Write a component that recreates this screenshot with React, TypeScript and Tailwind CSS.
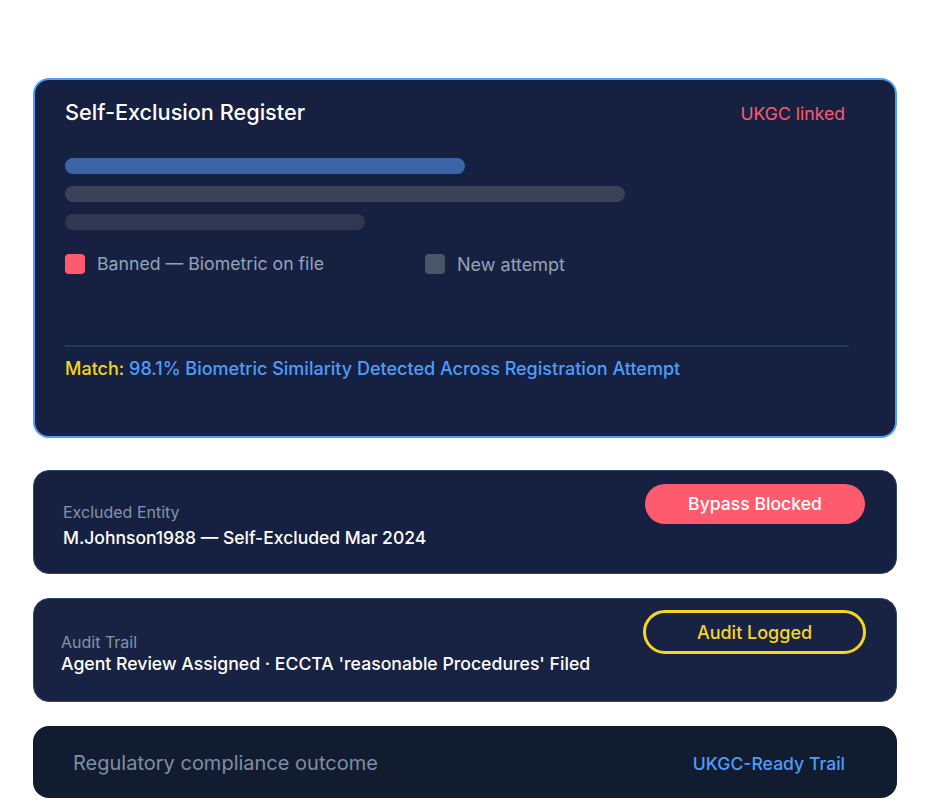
const App = () => {
  return (
    <div className="min-h-screen bg-white font-['Inter',sans-serif] antialiased pt-[78px] pl-[33px] w-[942px] h-[804px] overflow-hidden">
      <div className="w-[864px] flex flex-col">
        {/* register card */}
        <div className="h-[360px] rounded-2xl border-2 border-[#4f9cf9] bg-[#162142] pl-[30px] pr-[46px] pt-5">
          <div className="flex justify-between items-center h-6">
            <h2 className="text-[21.7px] font-medium text-white">Self-Exclusion Register</h2>
            <span className="mr-[4px] pt-[4px] text-[17.6px] text-[#ff5a6e]">UKGC linked</span>
          </div>
          <div className="mt-[34px] flex flex-col gap-3">
            <div className="h-4 w-[400px] rounded-full bg-[#3a66a8]"></div>
            <div className="h-4 w-[560px] rounded-full bg-[#3a4159]"></div>
            <div className="h-4 w-[300px] rounded-full bg-[#2f3753]"></div>
          </div>
          <div className="mt-6 flex items-center h-5">
            <div className="flex items-center gap-3 w-[360px]">
              <span className="w-5 h-5 rounded bg-[#ff5a6e]"></span>
              <span className="text-[17.7px] text-[#94a3b8]">Banned — Biometric on file</span>
            </div>
            <div className="flex items-center gap-3">
              <span className="w-5 h-5 rounded bg-[#4a5568]"></span>
              <span className="text-[18px] text-[#94a3b8]">New attempt</span>
            </div>
          </div>
          <div className="mt-[71px] h-0.5 bg-[#24375f]"></div>
          <p className="mt-[8px] text-[18px] font-medium text-[#4f9cf9]">
            <span className="text-[#f8d520]">Match:</span> 98.1% Biometric Similarity Detected Across Registration Attempt
          </p>
        </div>

        {/* excluded entity */}
        <div className="mt-8 h-[104px] rounded-2xl border border-[#33466f] bg-[#162142] pl-[29px] pr-[31px] pt-[13px] flex justify-between">
          <div className="pt-[18px]">
            <div className="text-[16px] leading-5 text-[#8593aa]">Excluded Entity</div>
            <div className="mt-[5px] text-[17.5px] leading-[22px] font-medium text-white">M.Johnson1988 — Self-Excluded Mar 2024</div>
          </div>
          <div className="w-[220px] h-10 rounded-full bg-[#ff5a6e] flex items-center justify-center text-[17.6px] font-medium text-white">
            Bypass Blocked
          </div>
        </div>

        {/* audit trail */}
        <div className="mt-6 h-[104px] rounded-2xl border border-[#33466f] bg-[#182343] pl-[27px] pr-[30px] pt-[11px] flex justify-between">
          <div className="pt-[22px]">
            <div className="text-[16px] leading-5 text-[#8593aa]">Audit Trail</div>
            <div className="mt-px text-[17.67px] leading-[22px] font-medium text-white">Agent Review Assigned · ECCTA 'reasonable Procedures' Filed</div>
          </div>
          <div className="w-[223px] h-11 rounded-full border-[3px] border-[#f8d520] flex items-center justify-center text-[18px] font-medium text-[#f8d520]">
            Audit Logged
          </div>
        </div>

        {/* outcome */}
        <div className="mt-6 h-[72px] rounded-2xl bg-[#111c30] pl-10 pr-[52px] flex items-center justify-between">
          <span className="text-[20px] text-[#7f8fa3] pt-[2px]">Regulatory compliance outcome</span>
          <span className="text-[17.6px] font-medium text-[#4f9cf9] pt-[4px]">UKGC-Ready Trail</span>
        </div>
      </div>
    </div>
  );
};

export default App;
